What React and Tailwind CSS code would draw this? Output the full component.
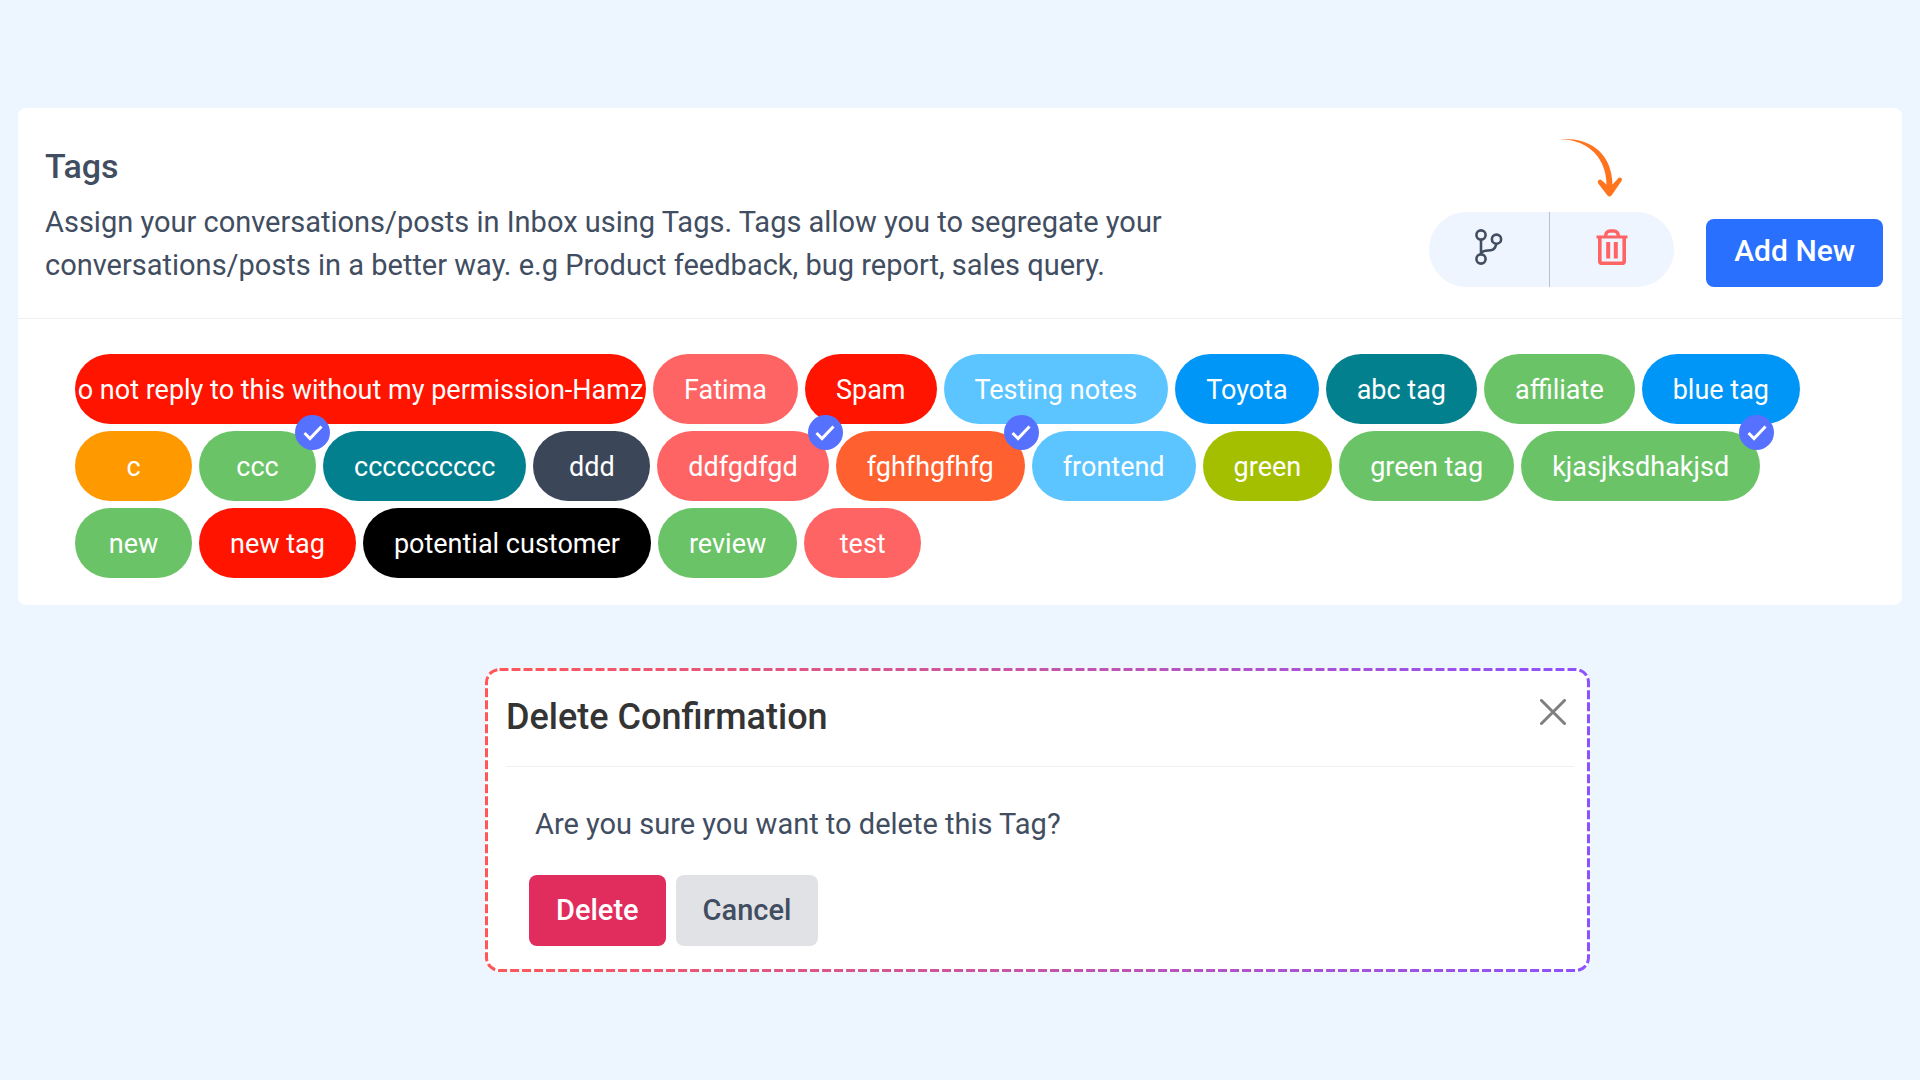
import { useState } from 'react';
import clsx from 'clsx';

const initialTags = [
  { name: 'o not reply to this without my permission-Hamz', color: 'bg-[#ff1400]' },
  { name: 'Fatima', color: 'bg-[#ff6464]' },
  { name: 'Spam', color: 'bg-[#ff1400]' },
  { name: 'Testing notes', color: 'bg-[#5cc5ff]' },
  { name: 'Toyota', color: 'bg-[#0096f7]' },
  { name: 'abc tag', color: 'bg-[#03808e]' },
  { name: 'affiliate', color: 'bg-[#6bc367]' },
  { name: 'blue tag', color: 'bg-[#0096f7]' },
  { name: 'c', color: 'bg-[#ff9900]' },
  { name: 'ccc', color: 'bg-[#6bc367]', selected: true },
  { name: 'cccccccccc', color: 'bg-[#03808e]' },
  { name: 'ddd', color: 'bg-[#3c4659]' },
  { name: 'ddfgdfgd', color: 'bg-[#ff6464]', selected: true },
  { name: 'fghfhgfhfg', color: 'bg-[#ff6030]', selected: true },
  { name: 'frontend', color: 'bg-[#5cc5ff]' },
  { name: 'green', color: 'bg-[#a4bf00]' },
  { name: 'green tag', color: 'bg-[#6bc367]' },
  { name: 'kjasjksdhakjsd', color: 'bg-[#6bc367]', selected: true },
  { name: 'new', color: 'bg-[#6bc367]' },
  { name: 'new tag', color: 'bg-[#ff1400]' },
  { name: 'potential customer', color: 'bg-black' },
  { name: 'review', color: 'bg-[#6bc367]' },
  { name: 'test', color: 'bg-[#ff6464]' },
];

function BranchIcon() {
  return (
    <svg width="28" height="36" viewBox="0 0 28 36" fill="none" stroke="currentColor" strokeWidth="2.6" aria-hidden="true">
      <circle cx="6" cy="6" r="4.6" />
      <circle cx="21.5" cy="10.2" r="4.6" />
      <circle cx="6" cy="30" r="4.6" />
      <path d="M6 10.6v14.800M6.500 23.500C9 21 14 22 17.500 20.700c2.500-1 3.300-3 3.800-5.900" />
    </svg>
  );
}

function TrashIcon() {
  return (
    <svg width="32" height="36" viewBox="0 0 32 36" fill="none" stroke="currentColor" aria-hidden="true">
      <path d="M0.500 8h31" strokeWidth="3" />
      <path d="M9.500 7c.5-3.500 2-5 4.500-5h4c2.500 0 4 1.500 4.500 5" strokeWidth="3.500" />
      <path d="M3.800 8v24.300q0 2 2 2h20.400q2 0 2-2V8" strokeWidth="3.600" />
      <path d="M12.200 13v16.500M19.800 13v16.500" strokeWidth="4" />
    </svg>
  );
}

function HintArrow() {
  return (
    <svg className="absolute right-[52px] bottom-full mb-3.5" width="62" height="60" viewBox="0 0 62 60" fill="#ff751f" aria-hidden="true">
      <path d="M0 1.200C32-1 52 17 52.500 46.500l6-6.500c2-1.500 4.500.8 3 3L51.500 57.500q-2 2-4 0L38.200 45.500c-1.500-3 1.500-5 3.500-3.300L46.500 46.500C46.500 22 30 1.500 0 1.200Z" />
    </svg>
  );
}

function Tag({ tag, onToggle }) {
  return (
    <button type="button" aria-pressed={!!tag.selected} onClick={onToggle} className="relative max-w-[571px]">
      <span
        className={clsx(
          'flex h-[70px] min-w-[117px] items-center justify-center rounded-full px-[31px] pt-0.5 whitespace-nowrap text-white',
          tag.color
        )}
      >
        {tag.name}
      </span>
      {tag.selected && (
        <span className="absolute -top-4 -right-3.5 flex size-[35px] items-center justify-center rounded-full bg-[#5771ff] text-white">
          <svg width="20" height="16" viewBox="0 0 20 16" fill="none" stroke="currentColor" strokeWidth="3" aria-hidden="true">
            <path d="M1.500 8l5.500 5.500L18.500 1.500" />
          </svg>
        </span>
      )}
    </button>
  );
}

function DeleteModal({ onClose }) {
  return (
    <section role="dialog" aria-labelledby="delete-title" className="relative w-full max-w-[1105px] rounded-2xl bg-white pt-6 pr-4 pb-[26px] pl-[21px]">
      {/* Dashed gradient outline */}
      <svg className="pointer-events-none absolute inset-0 size-full" fill="none" aria-hidden="true">
        <defs>
          <linearGradient id="outline" x1="0" y1="0" x2="1" y2="0">
            <stop offset="0" stopColor="#ff5757" />
            <stop offset="1" stopColor="#8c52ff" />
          </linearGradient>
        </defs>
        <rect
          className="h-[calc(100%-3px)] w-[calc(100%-3px)]"
          x="1.5"
          y="1.5"
          rx="13"
          stroke="url(#outline)"
          strokeWidth="3"
          strokeDasharray="9 3"
        />
      </svg>

      <div className="flex items-start justify-between border-b border-[#f0f0f1] pr-2 pb-6">
        <h2 id="delete-title" className="text-4xl leading-[50px] font-medium text-[#343434]">
          Delete Confirmation
        </h2>
        <button type="button" aria-label="Close" onClick={onClose} className="mt-[7px] text-[#7f7f7f]">
          <svg width="26" height="26" viewBox="0 0 26 26" fill="none" stroke="currentColor" strokeWidth="3" strokeLinecap="round" aria-hidden="true">
            <path d="M1.500 1.500l23 23M24.500 1.500l-23 23" />
          </svg>
        </button>
      </div>
      <p className="mt-9 pl-[29px] leading-[43px]">Are you sure you want to delete this Tag?</p>
      <div className="mt-[29px] flex gap-2.5 pl-[23px] font-medium">
        <button type="button" onClick={onClose} className="h-[71px] rounded-lg bg-[#e12d5e] px-[27px] text-white">
          Delete
        </button>
        <button type="button" onClick={onClose} className="h-[71px] rounded-lg bg-[#e1e2e6] px-[27px]">
          Cancel
        </button>
      </div>
    </section>
  );
}

export default function App() {
  const [tags, setTags] = useState(initialTags);
  const [showModal, setShowModal] = useState(true);

  const toggleTag = (name) => {
    setTags(tags.map((t) => (t.name === name ? { ...t, selected: !t.selected } : t)));
  };

  return (
    <main className="flex min-h-screen flex-col gap-[63px] bg-[#edf5ff] px-[18px] py-[108px] font-['Roboto',sans-serif] text-[29px] text-[#414d60]">
      <section className="rounded-lg bg-white">
        <header className="flex items-end justify-between gap-8 border-b border-[#f0f0f2] pt-[38px] pr-[19px] pb-[31px] pl-[27px]">
          <div className="max-w-[1140px]">
            <h1 className="mb-[15px] text-[34px] leading-10 font-medium">Tags</h1>
            <p className="leading-[43px]">
              Assign your conversations/posts in Inbox using Tags. Tags allow you to segregate your
              conversations/posts in a better way. e.g Product feedback, bug report, sales query.
            </p>
          </div>
          <div className="flex shrink-0 items-end gap-8">
            <div className="relative flex h-[75px] w-[245px] rounded-full bg-[#eef5fe]">
              <button type="button" aria-label="Merge tags" className="flex w-[121px] items-center justify-center border-r border-[#b9bfcf] pb-1.5">
                <BranchIcon />
              </button>
              <button
                type="button"
                aria-label="Delete tags"
                onClick={() => setShowModal(true)}
                className="flex flex-1 items-center justify-center pb-1.5 text-[#ff6464]"
              >
                <TrashIcon />
              </button>
              <HintArrow />
            </div>
            <button type="button" className="h-[68px] rounded-lg bg-[#2970ff] px-7 pb-1 text-3xl font-medium text-white">
              Add New
            </button>
          </div>
        </header>

        <div className="flex flex-wrap gap-[7px] px-[57px] pt-[35px] pb-[27px] text-[27px]">
          {tags.map((tag) => (
            <Tag key={tag.name} tag={tag} onToggle={() => toggleTag(tag.name)} />
          ))}
        </div>
      </section>

      {showModal && (
        <div className="flex justify-center pl-[155px]">
          <DeleteModal onClose={() => setShowModal(false)} />
        </div>
      )}
    </main>
  );
}
